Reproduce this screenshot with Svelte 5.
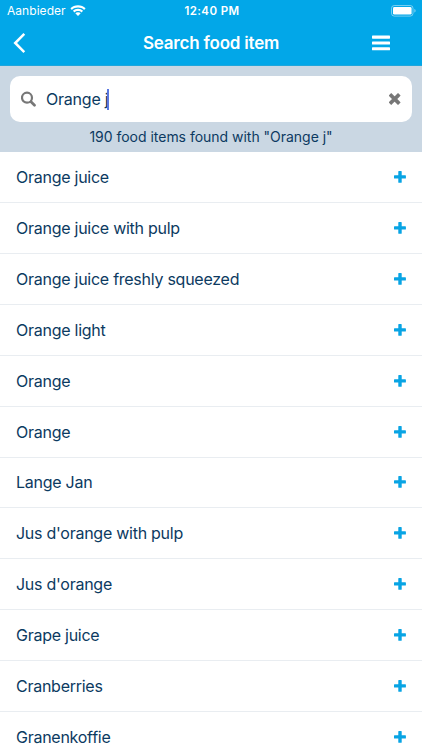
<script lang="ts">
	let query = 'Orange j';
	let total = 190;

	const items: string[] = [
		'Orange juice',
		'Orange juice with pulp',
		'Orange juice freshly squeezed',
		'Orange light',
		'Orange',
		'Orange',
		'Lange Jan',
		"Jus d'orange with pulp",
		"Jus d'orange",
		'Grape juice',
		'Cranberries',
		'Granenkoffie'
	];
</script>

<div class="screen">
	<header>
		<div class="status">
			<div class="carrier">
				<span>Aanbieder</span>
				<svg width="16" height="12" viewBox="0 0 16 12" fill="#fff">
					<path d="M8 0.3C11 0.3 13.6 1.4 15.6 3.3L14.1 4.9C12.5 3.4 10.4 2.6 8 2.6S3.5 3.4 1.9 4.9L0.4 3.3C2.4 1.4 5 0.3 8 0.3Z" />
					<path d="M8 3.8C10 3.8 11.7 4.5 13.1 5.8L11.5 7.4C10.6 6.6 9.4 6.1 8 6.1S5.4 6.6 4.5 7.4L2.9 5.8C4.3 4.5 6 3.8 8 3.8Z" />
					<path d="M8 7.3C9.1 7.3 10 7.7 10.7 8.3L8 11.1L5.3 8.3C6 7.7 6.9 7.3 8 7.3Z" />
				</svg>
			</div>
			<span class="time">12:40 PM</span>
			<svg class="battery" width="26" height="12" viewBox="0 0 26 12">
				<rect x="0.5" y="0.5" width="21.5" height="10.6" rx="2.8" fill="none" stroke="#fff" stroke-opacity="0.45" />
				<rect x="2" y="2" width="18.6" height="7.6" rx="1.4" fill="#fff" />
				<path d="M23.4 4v3.6c.8-.3 1.2-1 1.2-1.8s-.4-1.5-1.2-1.8z" fill="#fff" fill-opacity="0.5" />
			</svg>
		</div>
		<div class="nav">
			<button aria-label="Back">
				<svg width="14" height="22" viewBox="0 0 14 22">
					<path d="M12.3 1.9L3.2 11L12.3 20.1" fill="none" stroke="#fff" stroke-width="2.5" />
				</svg>
			</button>
			<h1>Search food item</h1>
			<button aria-label="Menu">
				<svg width="18" height="16" viewBox="0 0 18 16" fill="#fff">
					<rect y="0.6" width="18" height="3.1" rx="0.6" />
					<rect y="6.4" width="18" height="3.1" rx="0.6" />
					<rect y="12.2" width="18" height="3.1" rx="0.6" />
				</svg>
			</button>
		</div>
	</header>

	<section>
		<div class="search">
			<svg width="16" height="16" viewBox="0 0 16 16" fill="none" stroke="#777">
				<circle cx="6" cy="6.7" r="5" stroke-width="2.2" />
				<path d="M10 10.7L13.5 14.2" stroke-width="2.7" stroke-linecap="round" />
			</svg>
			<span class="query">{query}</span>
			<i class="caret"></i>
			<button aria-label="Clear">
				<svg width="12" height="12" viewBox="0 0 12 12">
					<path d="M2.2 2.6L9 9.4M9 2.6L2.2 9.4" stroke="#777" stroke-width="3.7" stroke-linecap="square" stroke-linejoin="round" />
				</svg>
			</button>
		</div>
		<p>{total} food items found with "{query}"</p>
	</section>

	<ul>
		{#each items as item}
			<li>
				<span>{item}</span>
				<button aria-label="Add {item}">
					<svg width="12" height="12" viewBox="0 0 12 12">
						<path
							d="M4.9 0H7.1Q7.7 0 7.7 .6V4.2H11.3Q11.9 4.2 11.9 4.8V6.9Q11.9 7.5 11.3 7.5H7.7V11.2Q7.7 11.8 7.1 11.8H4.9Q4.3 11.8 4.3 11.2V7.5H.6Q0 7.5 0 6.9V4.8Q0 4.2 .6 4.2H4.3V.6Q4.3 0 4.9 0Z"
							fill="#08a4e4"
						/>
					</svg>
				</button>
			</li>
		{/each}
	</ul>
</div>

<style>
	:global(body) {
		margin: 0;
		overflow: hidden;
	}
	.screen {
		height: 750px;
		overflow: hidden;
		background-color: white;
		color: #0c3a61;
		font-family: Inter, 'Liberation Sans', sans-serif;
	}
	button {
		display: flex;
		padding: 0;
		border: none;
		background: none;
		cursor: pointer;
	}
	svg {
		display: block;
		flex: none;
	}
	header {
		box-sizing: border-box;
		height: 66px;
		background-color: #02a7e8;
		border-bottom: 1px solid #1fa6dc;
		color: white;
	}
	.status {
		display: grid;
		grid-template-columns: 1fr auto 1fr;
		align-items: center;
		height: 21px;
		padding: 0 5px 0 7px;
		font-size: 12px;
	}
	.carrier {
		display: flex;
		align-items: center;
		gap: 4px;
		letter-spacing: 0.05px;
	}
	.time {
		font-weight: 600;
		font-size: 11.5px;
		letter-spacing: 0.4px;
	}
	.battery {
		justify-self: end;
	}
	.nav {
		display: flex;
		align-items: center;
		justify-content: space-between;
		height: 44px;
		padding: 0 32px 0 12px;
	}
	h1 {
		margin: 0;
		padding-left: 24px;
		font-size: 17px;
		font-weight: 600;
		letter-spacing: -0.2px;
	}
	section {
		box-sizing: border-box;
		height: 86px;
		padding: 10px 10px 0;
		background-color: #cad7e3;
	}
	.search {
		display: flex;
		align-items: center;
		box-sizing: border-box;
		height: 46px;
		padding: 0 11px;
		border-radius: 10px;
		background-color: white;
		font-size: 16px;
		letter-spacing: -0.22px;
	}
	.query {
		margin-left: 9px;
	}
	.caret {
		width: 2px;
		height: 21px;
		margin-left: -1px;
		background-color: #5a78e0;
	}
	.search button {
		margin-left: auto;
	}
	p {
		margin: 0;
		font-size: 14px;
		line-height: 30px;
		letter-spacing: -0.02px;
		text-align: center;
	}
	ul {
		margin: 0;
		padding: 0;
		list-style: none;
	}
	li {
		display: flex;
		align-items: center;
		justify-content: space-between;
		box-sizing: border-box;
		height: 50.93px;
		padding: 0 16px;
		border-bottom: 1px solid #e9edf1;
		font-size: 16px;
		letter-spacing: -0.26px;
	}
</style>
